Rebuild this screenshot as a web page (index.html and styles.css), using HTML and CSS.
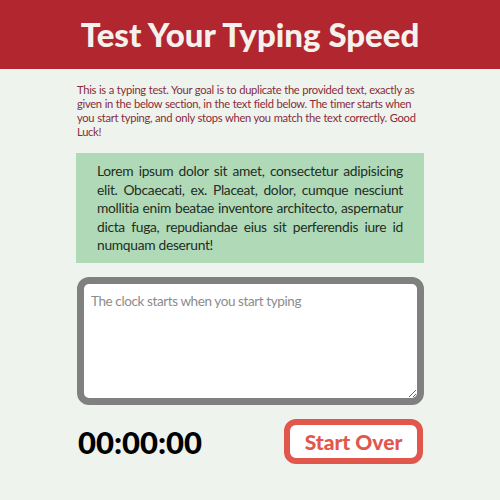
FILE: index.html
```html
<!DOCTYPE html>
<html lang="en">
<head>
<meta charset="utf-8">
<title>Typing Speed Test</title>
<link rel="stylesheet" href="styles.css">
</head>
<body>
<header class="masthead">
  <h1 class="title">Test Your Typing Speed</h1>
</header>
<main class="main">
  <p class="intro">This is a typing test. Your goal is to duplicate the provided text, exactly as given in the below section, in the text field below. The timer starts when you start typing, and only stops when you match the text correctly. Good Luck!</p>
  <div class="origin-text">
    <p>Lorem ipsum dolor sit amet, consectetur adipisicing elit. Obcaecati, ex. Placeat, dolor, cumque nesciunt mollitia enim beatae inventore architecto, aspernatur dicta fuga, repudiandae eius sit perferendis iure id numquam deserunt!</p>
  </div>
  <div class="test-wrapper">
    <textarea class="test-area" placeholder="The clock starts when you start typing"></textarea>
  </div>
  <div class="meta">
    <div class="timer">00:00:00</div>
    <button class="reset" type="button">Start Over</button>
  </div>
</main>
</body>
</html>
```
FILE: styles.css
```css
* { box-sizing: border-box; }
html, body { margin: 0; padding: 0; }
body {
  background: #eef3ed;
  font-family: "Lato", "Open Sans", sans-serif;
  color: #1f2a22;
}
.masthead {
  background: #b2262f;
  height: 69px;
  display: flex;
  align-items: center;
  justify-content: center;
}
.title {
  margin: 0;
  color: #f6f1ec;
  font-size: 33px;
  font-weight: 900;
  line-height: 1;
}
.main {
  width: 348px;
  margin: 0 auto;
}
.intro {
  margin: 14px 0 0;
  color: #8a2c3a;
  font-size: 11.2px;
  letter-spacing: -0.3px;
  word-spacing: 0.3px;
  line-height: 14px;
  padding-left: 1px;
}
.origin-text {
  margin-top: 14px;
  background: #b0dab7;
  padding: 9px 21px;
  height: 110px;
}
.origin-text p {
  margin: 0;
  font-size: 13.8px;
  letter-spacing: -0.3px;
  line-height: 18.6px;
  text-align: justify;
  color: #1f2d23;
}
.test-wrapper {
  margin-top: 14px;
  padding-left: 1px;
}
.test-area {
  display: block;
  width: 347px;
  height: 128px;
  border: 7px solid #808080;
  border-radius: 12px;
  background: #fff;
  padding: 8px 7px;
  font-family: inherit;
  font-size: 13.5px;
  letter-spacing: -0.4px;
  line-height: 18px;
  resize: vertical;
}
.test-area::placeholder { color: #8c8c8c; }
.meta {
  margin-top: 14px;
  display: flex;
  justify-content: space-between;
  align-items: center;
}
.timer {
  font-size: 31px;
  font-weight: 900;
  color: #000;
  padding-left: 2px;
}
.reset {
  width: 139px;
  height: 45px;
  border: 6px solid #e2574c;
  border-radius: 12px;
  background: #fff;
  color: #e2574c;
  font-family: inherit;
  font-size: 21px;
  font-weight: 900;
  margin-right: 1px;
}
```
